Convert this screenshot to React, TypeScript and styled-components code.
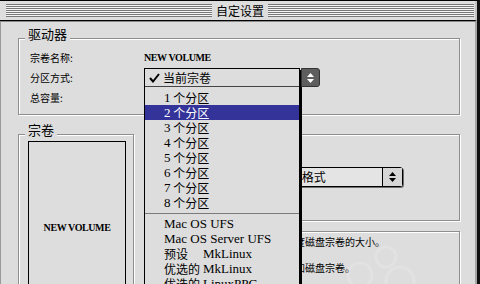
import React from 'react';
import styled, { createGlobalStyle } from 'styled-components';

const GlobalStyle = createGlobalStyle`
  html, body {
    margin: 0;
    padding: 0;
    background: #dddddd;
    overflow: hidden;
  }
  #root {
    width: 480px;
    height: 284px;
  }
`;

const Window = styled.div`
  position: relative;
  width: 480px;
  height: 284px;
  box-sizing: border-box;
  overflow: hidden;
  display: flex;
  flex-direction: column;
  background: #dddddd;
  border-top: 1px solid #000;
  border-right: 3px solid #111;
  color: #000;
  font-family: "Noto Sans CJK SC", "Liberation Sans", sans-serif;
`;

const TitleBar = styled.div`
  flex: none;
  height: 19px;
  display: flex;
  align-items: center;
  padding: 0 1px 0 6px;
  border-bottom: 1px solid #000;
  border-right: 2px solid #c4c4c4;
  background: #dddddd;
`;

const Stripes = styled.div`
  flex: 1;
  height: 13px;
  background: repeating-linear-gradient(to bottom, #777 0 1px, #f4f4f4 1px 2px);
`;

const Title = styled.div`
  padding: 0 4px;
  font-size: 12px;
  line-height: 19px;
`;

const Body = styled.div`
  flex: 1;
  display: flex;
  flex-direction: column;
  gap: 19px;
  padding: 16px 0 0 17px;
  border-top: 1px solid #8a8a8a;
  border-left: 1px solid #9a9a9a;
  border-right: 2px solid #a6a6a6;
`;

const Group = styled.div<{ $width: number; $height: number }>`
  flex: none;
  box-sizing: border-box;
  width: ${(p) => p.$width}px;
  height: ${(p) => p.$height}px;
  border: 1px solid #8e8e8e;
  box-shadow: 1px 1px 0 #fff, inset 1px 1px 0 #fff;
`;

const GroupTitle = styled.div`
  width: max-content;
  margin: -13px 0 0 6px;
  padding: 0 3px;
  background: #dddddd;
  font-size: 13px;
  line-height: 16px;
`;

const Rows = styled.div`
  margin-top: 5px;
`;

const Row = styled.div`
  height: 20px;
  display: flex;
  align-items: center;
  padding-left: 11px;
`;

const Label = styled.div`
  width: 114px;
  font-size: 10px;
`;

const VolumeName = styled.span`
  font-family: "Liberation Serif", serif;
  font-weight: 700;
  font-size: 10px;
  letter-spacing: -0.4px;
`;

const PopupAnchor = styled.div`
  position: relative;
  width: 177px;
  height: 20px;
`;

const OpenMenu = styled.div`
  position: absolute;
  top: 1px;
  left: 0;
  z-index: 5;
  display: flex;
  align-items: flex-start;
`;

const MenuList = styled.div`
  width: 154px;
  background: #dddddd;
  border: 1px solid #000;
  box-shadow: 2px 2px 0 #000;
`;

const CurrentItem = styled.div`
  height: 17px;
  display: flex;
  align-items: center;
  padding-left: 3px;
  border-bottom: 1px solid #444;
  font-size: 12px;
  margin-bottom: 3px;
`;

const Check = styled.svg`
  width: 15px;
  height: 10px;
  flex: none;
`;

const MenuItem = styled.div<{ $active?: boolean }>`
  height: 15px;
  display: flex;
  align-items: center;
  padding-left: 19px;
  font-size: 12px;
  line-height: 15px;
  white-space: nowrap;
  background: ${(p) => (p.$active ? '#333399' : 'transparent')};
  color: ${(p) => (p.$active ? '#fff' : '#000')};
`;

const MenuSeparator = styled.div`
  height: 6px;
  display: flex;
  align-items: center;

  &::before {
    content: '';
    flex: 1;
    height: 1px;
    background: #7a7a7a;
  }
`;

const Latin = styled.span`
  font-family: "Liberation Serif", serif;
  font-size: 13px;
  line-height: 15px;
`;

const Prefix = styled.span`
  display: inline-block;
  width: 39px;
`;

const ArrowButton = styled.div`
  flex: none;
  box-sizing: border-box;
  width: 19px;
  height: 19px;
  margin-left: 1px;
  display: flex;
  align-items: center;
  justify-content: center;
  background: #5e5e5e;
  border: 1px solid #333;
  border-radius: 0 3px 3px 0;
`;

const Lower = styled.div`
  display: flex;
  gap: 10px;
`;

const RightColumn = styled.div`
  width: 316px;
  display: flex;
  flex-direction: column;
  gap: 10px;
`;

const VolumeBox = styled.div`
  box-sizing: border-box;
  width: 98px;
  height: 172px;
  margin: 3px 0 0 9px;
  display: flex;
  align-items: center;
  justify-content: center;
  border: 1px solid #000;
`;

const FieldRow = styled.div`
  display: flex;
  align-items: center;
  margin-top: 29px;
  padding-left: 10px;
`;

const FieldLabel = styled.div`
  width: 67px;
  font-size: 10px;
`;

const Popup = styled.div`
  box-sizing: border-box;
  width: 181px;
  height: 20px;
  display: flex;
  border: 1px solid #000;
  border-radius: 3px;
  background: #e4e4e4;
  box-shadow: 1px 1px 0 #6e6e6e;
`;

const PopupValue = styled.div`
  flex: 1;
  padding-left: 9px;
  font-size: 12px;
  line-height: 18px;
  white-space: nowrap;
  overflow: hidden;
`;

const PopupArrows = styled.div`
  width: 19px;
  display: flex;
  align-items: center;
  justify-content: center;
  border-left: 1px solid #000;
  background: #d6d6d6;
`;

const HelpText = styled.div`
  padding: 3px 0 0 10px;
  font-size: 10px;
  line-height: 14px;
  white-space: nowrap;
`;

const HelpLine = styled.div<{ $gap?: number }>`
  margin-top: ${(p) => p.$gap ?? 0}px;
`;

const Watermark = styled.svg`
  position: absolute;
  left: 338px;
  top: 236px;
  width: 90px;
  height: 60px;
  pointer-events: none;
`;

const Arrows = ({ color }: { color: string }) => (
  <svg width="9" height="12" viewBox="0 0 9 12">
    <path d="M4.5 1 L8 5 L1 5 Z" fill={color} />
    <path d="M1 7 L8 7 L4.5 11 Z" fill={color} />
  </svg>
);

const renderLabel = (text: string) =>
  text.split(/([\u4e00-\u9fff]+)/).filter(Boolean).map((part, i) =>
    /[\u4e00-\u9fff]/.test(part) ? (
      <Prefix key={i}>{part}</Prefix>
    ) : (
      <Latin key={i}>{part.trim()}</Latin>
    ),
  );

const partitions = [1, 2, 3, 4, 5, 6, 7, 8];
const formats = ['Mac OS UFS', 'Mac OS Server UFS', '预设 MkLinux', '优选的 MkLinux', '优选的 LinuxPPC'];

export default function App(): JSX.Element {
  return (
    <>
      <GlobalStyle />
      <Window>
        <TitleBar>
          <Stripes />
          <Title>自定设置</Title>
          <Stripes />
        </TitleBar>
        <Body>
          <Group $width={442} $height={77}>
            <GroupTitle>驱动器</GroupTitle>
            <Rows>
              <Row>
                <Label>宗卷名称:</Label>
                <VolumeName>NEW VOLUME</VolumeName>
              </Row>
              <Row>
                <Label>分区方式:</Label>
                <PopupAnchor>
                  <OpenMenu>
                    <MenuList>
                      <CurrentItem>
                        <Check viewBox="0 0 15 10">
                          <path d="M2 5 L5 8.5 L11 1" stroke="#000" strokeWidth="2" fill="none" />
                        </Check>
                        当前宗卷
                      </CurrentItem>
                      {partitions.map((n) => (
                        <MenuItem key={n} $active={n === 2}>
                          <Latin>{n}</Latin>&nbsp;个分区
                        </MenuItem>
                      ))}
                      <MenuSeparator />
                      {formats.map((f) => (
                        <MenuItem key={f}>{renderLabel(f)}</MenuItem>
                      ))}
                    </MenuList>
                    <ArrowButton>
                      <Arrows color="#fff" />
                    </ArrowButton>
                  </OpenMenu>
                </PopupAnchor>
              </Row>
              <Row>
                <Label>总容量:</Label>
              </Row>
            </Rows>
          </Group>
          <Lower>
            <Group $width={116} $height={200}>
              <GroupTitle>宗卷</GroupTitle>
              <VolumeBox>
                <VolumeName>NEW VOLUME</VolumeName>
              </VolumeBox>
            </Group>
            <RightColumn>
              <Group $width={316} $height={87}>
                <GroupTitle>宗卷信息</GroupTitle>
                <FieldRow>
                  <FieldLabel>类型:</FieldLabel>
                  <Popup>
                    <PopupValue>
                      <Latin>Mac OS</Latin> 扩展格式
                    </PopupValue>
                    <PopupArrows>
                      <Arrows color="#000" />
                    </PopupArrows>
                  </Popup>
                </FieldRow>
              </Group>
              <Group $width={316} $height={80}>
                <HelpText>
                  <HelpLine>拖动分隔线或输入数值可调整长度磁盘宗卷的大小。</HelpLine>
                  <HelpLine $gap={12}>选择分区后，可以点按按钮来增加磁盘宗卷。</HelpLine>
                </HelpText>
              </Group>
            </RightColumn>
          </Lower>
        </Body>
        <Watermark viewBox="0 0 90 60">
          <g fill="none" stroke="#ffffff" strokeOpacity="0.15" strokeWidth="3">
            <circle cx="22" cy="38" r="12" />
            <circle cx="48" cy="20" r="10" />
            <circle cx="62" cy="44" r="14" />
          </g>
        </Watermark>
      </Window>
    </>
  );
}
